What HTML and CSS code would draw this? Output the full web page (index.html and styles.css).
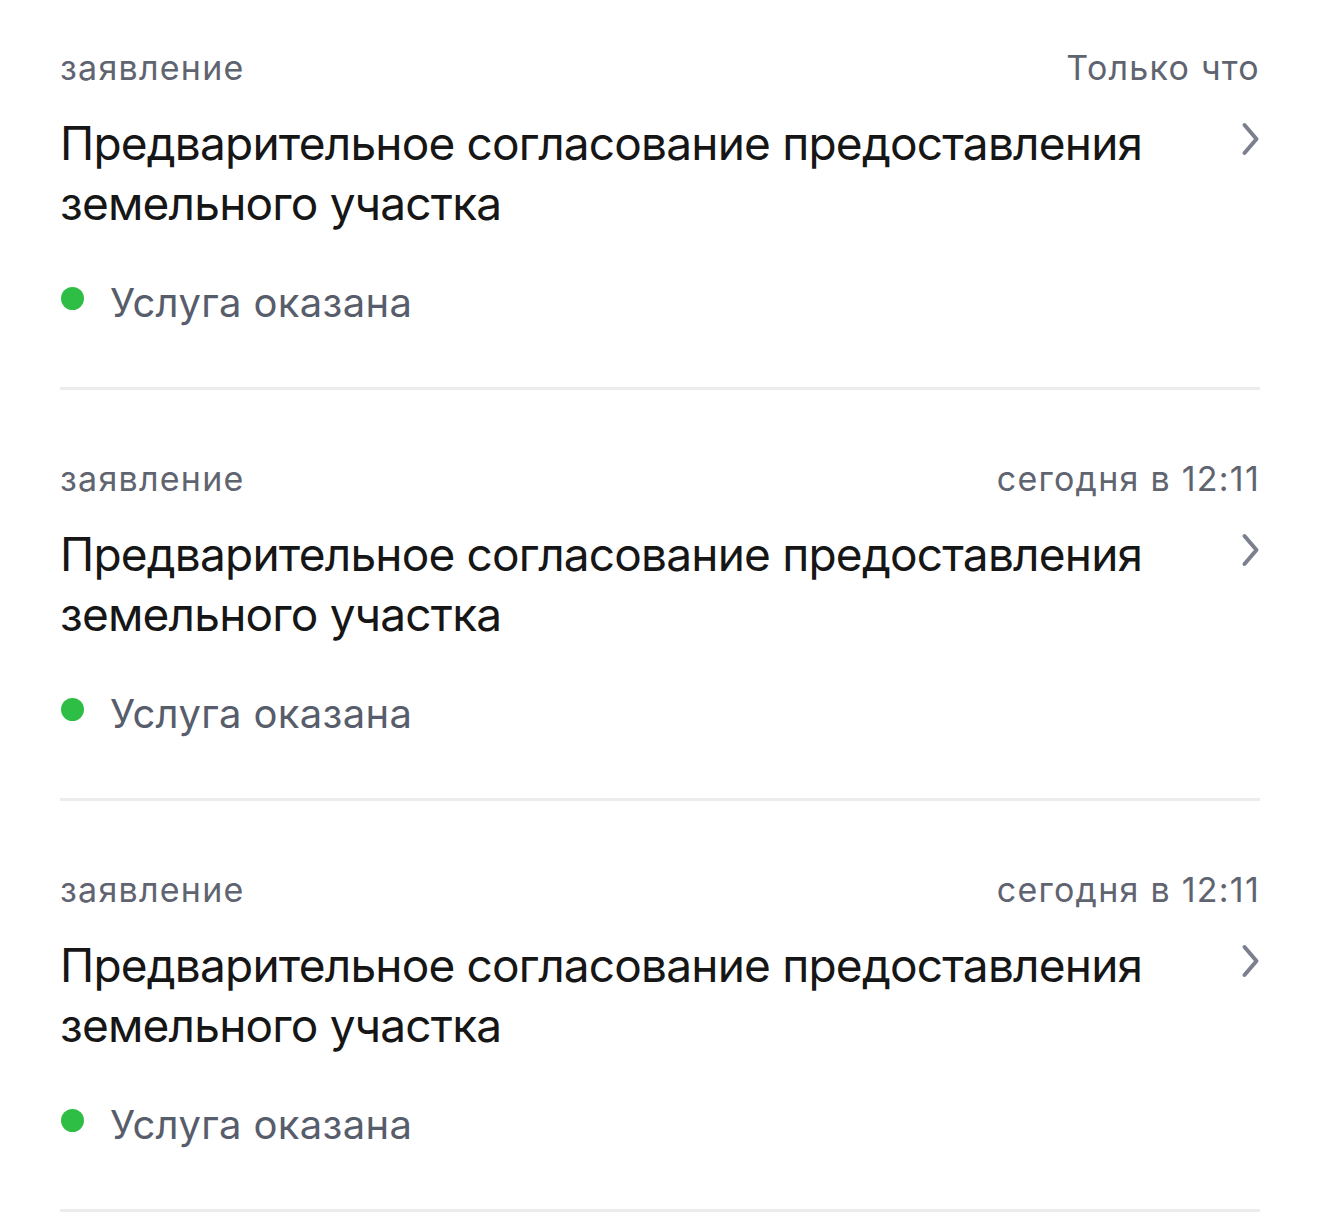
FILE: index.html
```html
<!DOCTYPE html>
<html lang="ru">
<head>
<meta charset="utf-8">
<link rel="stylesheet" href="styles.css">
</head>
<body>
<div class="list">
  <div class="item">
    <div class="meta"><span>заявление</span><span>Только что</span></div>
    <div class="body">
      <div class="title">Предварительное согласование предоставления земельного участка</div>
      <svg class="chev" viewBox="0 0 20 34" width="20" height="34"><path d="M4.5 3 L16.5 17 L4.5 31" fill="none" stroke="#7c808e" stroke-width="4" stroke-linecap="round" stroke-linejoin="round"/></svg>
    </div>
    <div class="status"><span class="dot"></span><span>Услуга оказана</span></div>
  </div>
  <div class="item">
    <div class="meta"><span>заявление</span><span>сегодня в 12:11</span></div>
    <div class="body">
      <div class="title">Предварительное согласование предоставления земельного участка</div>
      <svg class="chev" viewBox="0 0 20 34" width="20" height="34"><path d="M4.5 3 L16.5 17 L4.5 31" fill="none" stroke="#7c808e" stroke-width="4" stroke-linecap="round" stroke-linejoin="round"/></svg>
    </div>
    <div class="status"><span class="dot"></span><span>Услуга оказана</span></div>
  </div>
  <div class="item">
    <div class="meta"><span>заявление</span><span>сегодня в 12:11</span></div>
    <div class="body">
      <div class="title">Предварительное согласование предоставления земельного участка</div>
      <svg class="chev" viewBox="0 0 20 34" width="20" height="34"><path d="M4.5 3 L16.5 17 L4.5 31" fill="none" stroke="#7c808e" stroke-width="4" stroke-linecap="round" stroke-linejoin="round"/></svg>
    </div>
    <div class="status"><span class="dot"></span><span>Услуга оказана</span></div>
  </div>
</div>
</body>
</html>
```
FILE: styles.css
```css
html, body {
  margin: 0;
  padding: 0;
  background: #ffffff;
}
body {
  font-family: Inter, "Noto Sans", sans-serif;
  -webkit-font-smoothing: antialiased;
}
.list {
  padding: 0 60px;
  margin-top: -21px;
}
.item {
  box-sizing: border-box;
  height: 411px;
  padding-top: 69px;
  border-bottom: 3px solid #ececec;
}
.meta {
  display: flex;
  justify-content: space-between;
  font-size: 34px;
  line-height: 40px;
  color: #5f6470;
  letter-spacing: 1.25px;
}
.body {
  display: flex;
  align-items: flex-start;
  justify-content: space-between;
  margin-top: 25px;
}
.title {
  font-size: 46px;
  line-height: 60px;
  letter-spacing: -0.8px;
  color: #161616;
  max-width: 1120px;
}
.chev {
  margin-top: 9px;
  flex: none;
}
.status {
  display: flex;
  align-items: center;
  margin-top: 46px;
  font-size: 40px;
  line-height: 48px;
  letter-spacing: 0.35px;
  color: #575d6b;
}
.dot {
  width: 23px;
  height: 23px;
  border-radius: 50%;
  background: #2fbe45;
  margin-right: 26px;
  margin-left: 1px;
  margin-bottom: 9px;
}
```
